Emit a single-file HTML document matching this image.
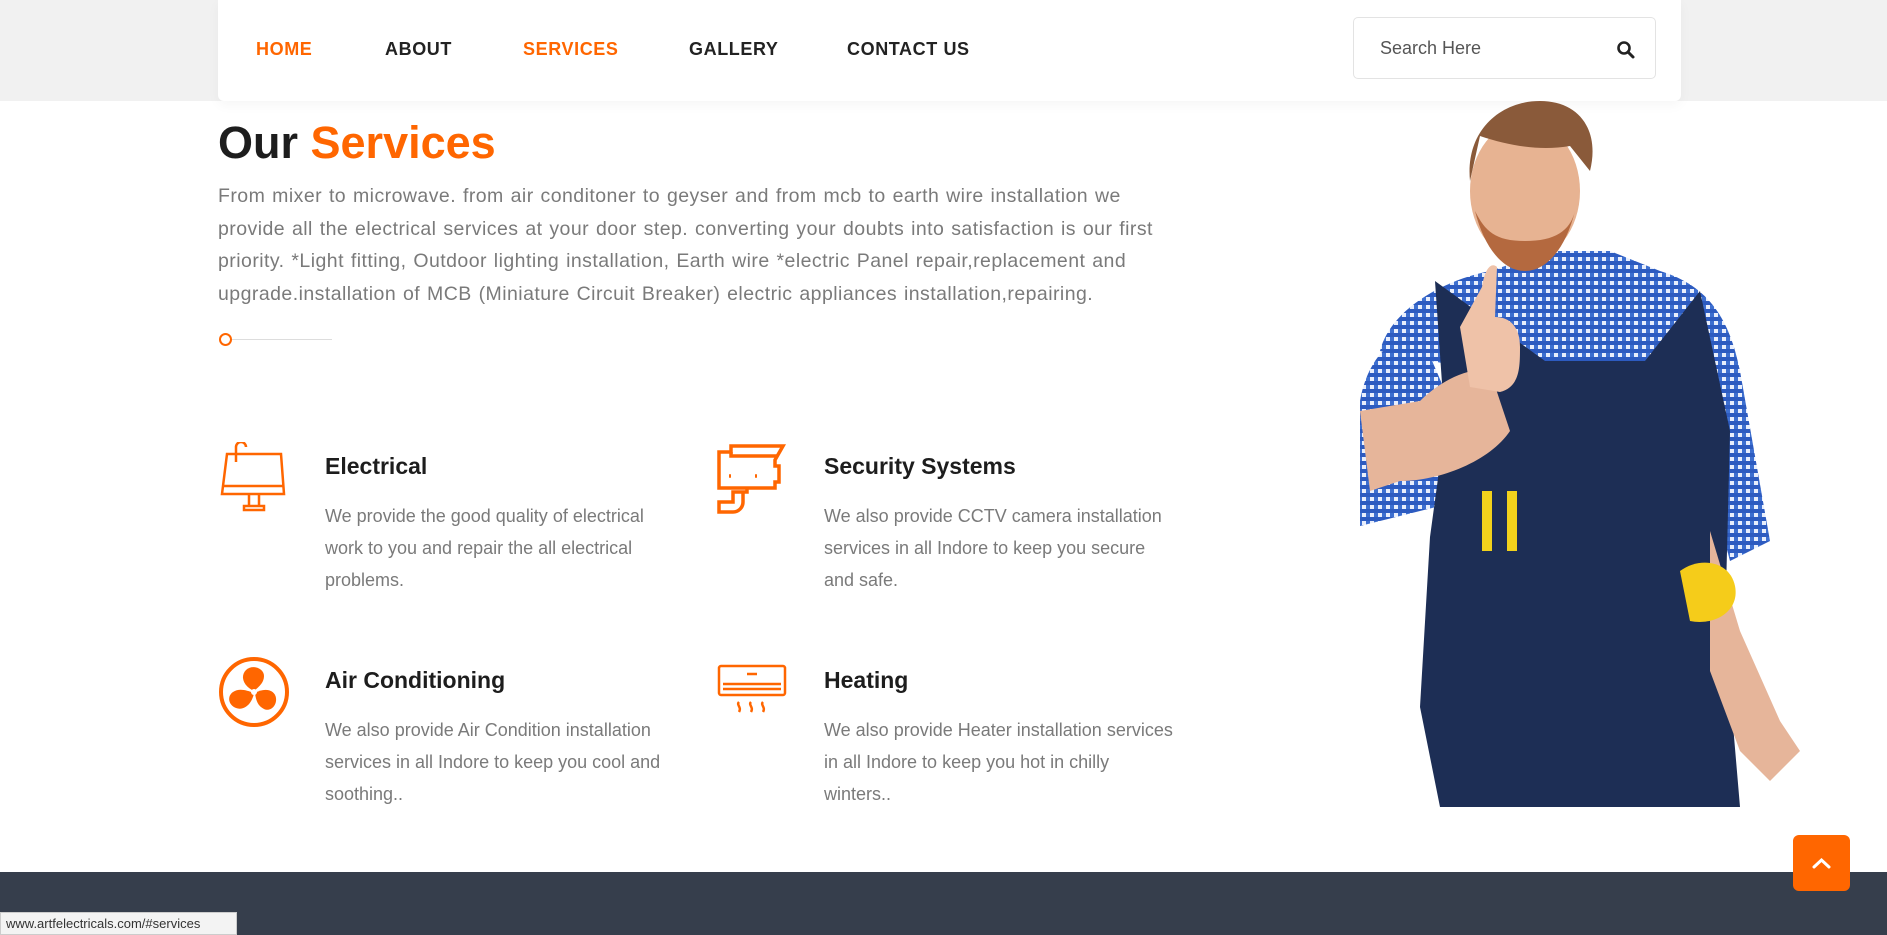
<!DOCTYPE html>
<html><head><meta charset="utf-8"><style>
*{margin:0;padding:0;box-sizing:border-box}
body{width:1887px;height:935px;overflow:hidden;background:#fff;font-family:"Liberation Sans",sans-serif;position:relative}
.band{position:absolute;left:0;top:0;width:1887px;height:101px;background:#f1f1f1}
.nav{position:absolute;left:218px;top:0;width:1463px;height:101px;background:#fff;border-radius:0 0 6px 6px;box-shadow:0 4px 12px rgba(0,0,0,.04)}
.nav a{position:absolute;top:39px;font-size:18px;font-weight:bold;letter-spacing:.6px;color:#222;text-decoration:none}
.search{position:absolute;left:1353px;top:17px;width:303px;height:62px;border:1px solid #e3e3e3;border-radius:5px;background:#fff}
.search span{position:absolute;left:26px;top:20px;font-size:18px;color:#555}
h1{position:absolute;left:218px;top:117px;font-size:45px;font-weight:bold;color:#1d1d1d}
h1 b{color:#ff6600}
.intro{position:absolute;left:218px;top:180px;width:1000px;font-size:19.5px;letter-spacing:.45px;word-spacing:1px;line-height:32.5px;color:#7a7a7a;white-space:nowrap}
.dot{position:absolute;left:219px;top:333px;width:13px;height:13px;border:2px solid #ff6600;border-radius:50%}
.line{position:absolute;left:232px;top:339px;width:100px;height:1px;background:#ddd}
.t{position:absolute;font-size:23px;font-weight:bold;color:#1d1d1d}
.d{position:absolute;font-size:18px;line-height:32px;color:#7a7a7a;white-space:nowrap}
.ic{position:absolute}
.foot{position:absolute;left:0;top:872px;width:1887px;height:63px;background:#363e4c}
.top{position:absolute;left:1793px;top:835px;width:57px;height:56px;background:#ff6600;border-radius:6px}
.status{position:absolute;left:0;top:912px;width:237px;height:23px;background:#f3f3f3;border:1px solid #ccc;font-size:13px;color:#333;padding:3px 5px}
</style></head><body>
<div class="band"></div>
<div class="nav">
<a style="left:38px;color:#ff6600">HOME</a>
<a style="left:167px">ABOUT</a>
<a style="left:305px;color:#ff6600">SERVICES</a>
<a style="left:471px">GALLERY</a>
<a style="left:629px">CONTACT US</a>
</div>
<div class="search"><span>Search Here</span>
<svg style="position:absolute;left:262px;top:22px" width="20" height="20" viewBox="0 0 20 20"><circle cx="8" cy="8" r="5.5" fill="none" stroke="#222" stroke-width="2.6"/><path d="M12 12l5 5" stroke="#222" stroke-width="3" stroke-linecap="round"/></svg></div>
<h1>Our <b>Services</b></h1>
<div class="intro">From mixer to microwave. from air conditoner to geyser and from mcb to earth wire installation we<br>provide all the electrical services at your door step. converting your doubts into satisfaction is our first<br>priority. *Light fitting, Outdoor lighting installation, Earth wire *electric Panel repair,replacement and<br>upgrade.installation of MCB (Miniature Circuit Breaker) electric appliances installation,repairing.</div>
<div class="dot"></div><div class="line"></div>

<svg class="ic" style="left:219px;top:442px" width="68" height="70" viewBox="0 0 68 70" fill="none" stroke="#ff6600" stroke-width="2.5"><path d="M17 20V5a5 5 0 0 1 10 0"/><path d="M8 12h54l3 40H3z"/><path d="M3 44h62"/><path d="M30 52v12M40 52v12M25 64h20v4H25z"/></svg>
<div class="t" style="left:325px;top:453px">Electrical</div>
<div class="d" style="left:325px;top:500px">We provide the good quality of electrical<br>work to you and repair the all electrical<br>problems.</div>

<svg class="ic" style="left:717px;top:442px" width="70" height="72" viewBox="0 0 70 72" fill="none" stroke="#ff6600" stroke-width="3.5"><path d="M2 10h12V4h52l-8 14v6h4v16h-4v6H2z"/><path d="M14 10v4h46"/><path d="M12 34h2M38 34h2"/><path d="M30 46v4h-14v10h-14v10h14a10 10 0 0 0 10-10v-10h4"/></svg>
<div class="t" style="left:824px;top:453px">Security Systems</div>
<div class="d" style="left:824px;top:500px">We also provide CCTV camera installation<br>services in all Indore to keep you secure<br>and safe.</div>

<svg class="ic" style="left:218px;top:656px" width="72" height="72" viewBox="0 0 72 72"><ellipse cx="36" cy="36" rx="33" ry="33" fill="none" stroke="#ff6600" stroke-width="4"/><g fill="#ff6600"><path d="M36 35C25 30 22 20 28 14s18-2 18 6c0 6-4 10-10 15z"/><path d="M36 37c-2 11-10 18-18 15S9 40 15 36s13-2 21 1z"/><path d="M37 37c10-6 20-3 21 5s-6 14-12 11-8-8-9-16z"/></g><circle cx="36" cy="36" r="3" fill="#fff"/></svg>
<div class="t" style="left:325px;top:667px">Air Conditioning</div>
<div class="d" style="left:325px;top:714px">We also provide Air Condition installation<br>services in all Indore to keep you cool and<br>soothing..</div>

<svg class="ic" style="left:717px;top:664px" width="72" height="56" viewBox="0 0 72 56" fill="none" stroke="#ff6600" stroke-width="2.5"><rect x="2" y="2" width="66" height="29" rx="2"/><path d="M30 10h10M6 20h58M6 25h58"/><path d="M22 38c-3 3 3 5 0 10M34 38c-3 3 3 5 0 10M46 38c-3 3 3 5 0 10"/></svg>
<div class="t" style="left:824px;top:667px">Heating</div>
<div class="d" style="left:824px;top:714px">We also provide Heater installation services<br>in all Indore to keep you hot in chilly<br>winters..</div>

<svg class="ic" style="left:1350px;top:101px" width="450" height="706" viewBox="0 0 450 706">
<defs><pattern id="ch" width="8" height="8" patternUnits="userSpaceOnUse"><rect width="8" height="8" fill="#e8eefc"/><rect width="4" height="8" fill="#3d6fd0"/><rect width="8" height="4" fill="#2d5bc0"/></pattern></defs>
<path d="M30 250c10-40 60-70 110-80l60-20h60l50 20c50 15 70 50 80 100l30 170-40 20-40-150z" fill="url(#ch)"/>
<path d="M10 300c5-30 20-50 30-55l40 10 30 70-20 80-80 20z" fill="url(#ch)"/>
<path d="M85 180l110 80h100l55-70 30 140-5 200 15 176H90l-20-100 10-170 15-110z" fill="#1d2e55"/>
<path d="M50 380c40 0 90-20 110-50l-20-60c-20-5-50 10-70 30L10 310l10 80z" fill="#e6b59a"/>
<path d="M132 186c3-20 10-25 15-20l-2 50c15 0 25 10 25 30s0 40-20 45l-30-5-10-60z" fill="#efc2a8"/>
<path d="M360 430l30 100 40 90 20 30-30 30-30-30-30-80z" fill="#e6b59a"/>
<ellipse cx="175" cy="90" rx="55" ry="70" fill="#e7b392"/>
<path d="M120 80c-5-50 30-80 70-80s60 30 50 70l-20-25c-30 5-60 0-90-10z" fill="#8a5a3a"/>
<path d="M125 110c10 40 30 60 50 60s40-20 50-60c-5 20-20 30-50 30s-40-10-50-30z" fill="#b4693f"/>
<rect x="132" y="390" width="10" height="60" fill="#f2d21c"/><rect x="157" y="390" width="10" height="60" fill="#f2d21c"/>
<path d="M330 470c20-15 50-10 55 15s-20 40-45 35z" fill="#f5cc1a"/>
</svg>

<div class="foot"></div>
<div class="top"><svg width="57" height="56" viewBox="0 0 57 56"><path d="M21 32l7.5-7 7.5 7" fill="none" stroke="#fff" stroke-width="3" stroke-linecap="round"/></svg></div>
<div class="status">www.artfelectricals.com/#services</div>
</body></html>
